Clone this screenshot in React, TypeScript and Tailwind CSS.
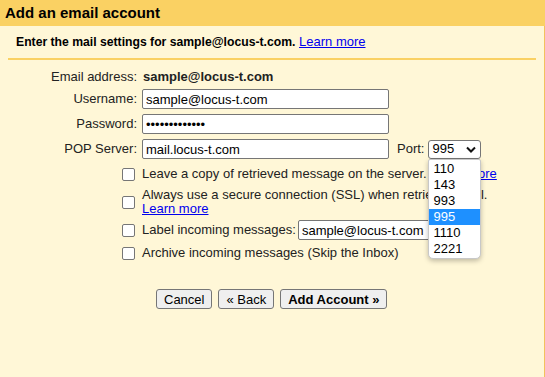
import React from 'react';

const ports = ['110', '143', '993', '995', '1110', '2221'];

const Checkbox = () => (
  <span className="w-[13px] h-[13px] shrink-0 rounded-[2px] border border-[#767676] bg-white" />
);

const Field = ({ value, type = 'text', width = 'w-[247px]' }: { value: string; type?: string; width?: string }) => (
  <input
    readOnly
    type={type}
    value={value}
    className={`${width} h-[20px] rounded-[2px] border border-[#767676] bg-white px-[3px] text-[13px] text-black outline-none`}
  />
);

const Button = ({ label, bold }: { label: string; bold?: boolean }) => (
  <button className={`h-[20px] rounded-[3px] border border-[#767676] bg-[#efefef] px-[7px] text-[13px] leading-none text-black ${bold ? 'font-bold' : ''}`}>
    {label}
  </button>
);

export default function App() {
  return (
    <div className="w-[545px] h-[377px] flex flex-col font-['Liberation_Sans',Arial,sans-serif] text-[13px] text-[#222]">
      <div className="h-[26px] shrink-0 bg-[#fad163] pl-[5px] flex items-center text-[15px] font-bold text-black">
        Add an email account
      </div>

      <div className="flex-1 flex flex-col bg-[#fff7d7] border-r border-[#f2c25c]">
        <div className="pl-[16px] pt-[8px] leading-[15px] text-black">
          <span className="font-bold text-[12.2px]">Enter the mail settings for sample@locus-t.com.</span>{' '}
          <a className="text-[#0000ee] underline">Learn more</a>
        </div>
        <div className="mx-[8px] mt-[8px] h-[2px] bg-[#fad163]" />

        {/* account fields */}
        <div className="mt-[7px] flex h-[20px] items-center">
          <div className="w-[137px] text-right">Email address:</div>
          <div className="ml-[6px] font-bold">sample@locus-t.com</div>
        </div>
        <div className="mt-[2px] flex h-[20px] items-center">
          <div className="w-[137px] text-right">Username:</div>
          <div className="ml-[5px] flex"><Field value="sample@locus-t.com" /></div>
        </div>
        <div className="mt-[5px] flex h-[20px] items-center">
          <div className="w-[137px] text-right">Password:</div>
          <div className="ml-[5px] flex"><Field type="password" value="abcdefghijklm" /></div>
        </div>
        <div className="mt-[5px] flex h-[20px] items-center">
          <div className="w-[137px] text-right">POP Server:</div>
          <div className="ml-[5px] flex"><Field value="mail.locus-t.com" /></div>
          <span className="ml-[8px]">Port:</span>
          <div className="relative ml-[4px] z-10">
            <div className="flex h-[19px] w-[53px] items-center justify-between rounded-[3px] border border-[#767676] bg-white pl-[3px] pr-[4px] text-black">
              <span>995</span>
              <svg width="10" height="7" viewBox="0 0 10 7">
                <path d="M1 1.5 L5 5.5 L9 1.5" fill="none" stroke="#111" strokeWidth="2" />
              </svg>
            </div>
            <div className="absolute left-0 top-[19px] w-[53px] rounded-b-[5px] rounded-t-[2px] border border-[#c8c8c8] bg-white py-[1px] shadow-[0_2px_5px_rgba(0,0,0,0.25)]">
              {ports.map((p) => (
                <div
                  key={p}
                  className={`h-[16px] pl-[4px] leading-[15px] ${p === '995' ? 'bg-[#1e90ff] text-white' : 'text-black'}`}
                >
                  {p}
                </div>
              ))}
            </div>
          </div>
        </div>

        {/* options */}
        <div className="mt-[7px] flex h-[16px] items-center pl-[122px] whitespace-nowrap">
          <Checkbox />
          <span className="ml-[7px]">
            Leave a copy of retrieved message on the server.{' '}
            <a className="text-[#0000ee] underline">Learn more</a>
          </span>
        </div>
        <div className="mt-[6px] flex items-center pl-[122px] whitespace-nowrap">
          <Checkbox />
          <span className="ml-[7px] leading-[14px]">
            Always use a secure connection (SSL) when retrieving mail.
            <br />
            <a className="text-[#0000ee] underline">Learn more</a>
          </span>
        </div>
        <div className="mt-[4px] flex h-[20px] items-center pl-[122px] whitespace-nowrap">
          <Checkbox />
          <span className="ml-[7px]">Label incoming messages:</span>
          <div className="ml-[2px] flex"><Field value="sample@locus-t.com" width="w-[150px]" /></div>
        </div>
        <div className="mt-[6px] flex h-[14px] items-center pl-[122px] whitespace-nowrap">
          <Checkbox />
          <span className="ml-[7px]">Archive incoming messages (Skip the Inbox)</span>
        </div>

        <div className="mt-[29px] flex gap-[6px] pl-[156px]">
          <Button label="Cancel" />
          <Button label="« Back" />
          <Button label="Add Account »" bold />
        </div>
      </div>
    </div>
  );
}
